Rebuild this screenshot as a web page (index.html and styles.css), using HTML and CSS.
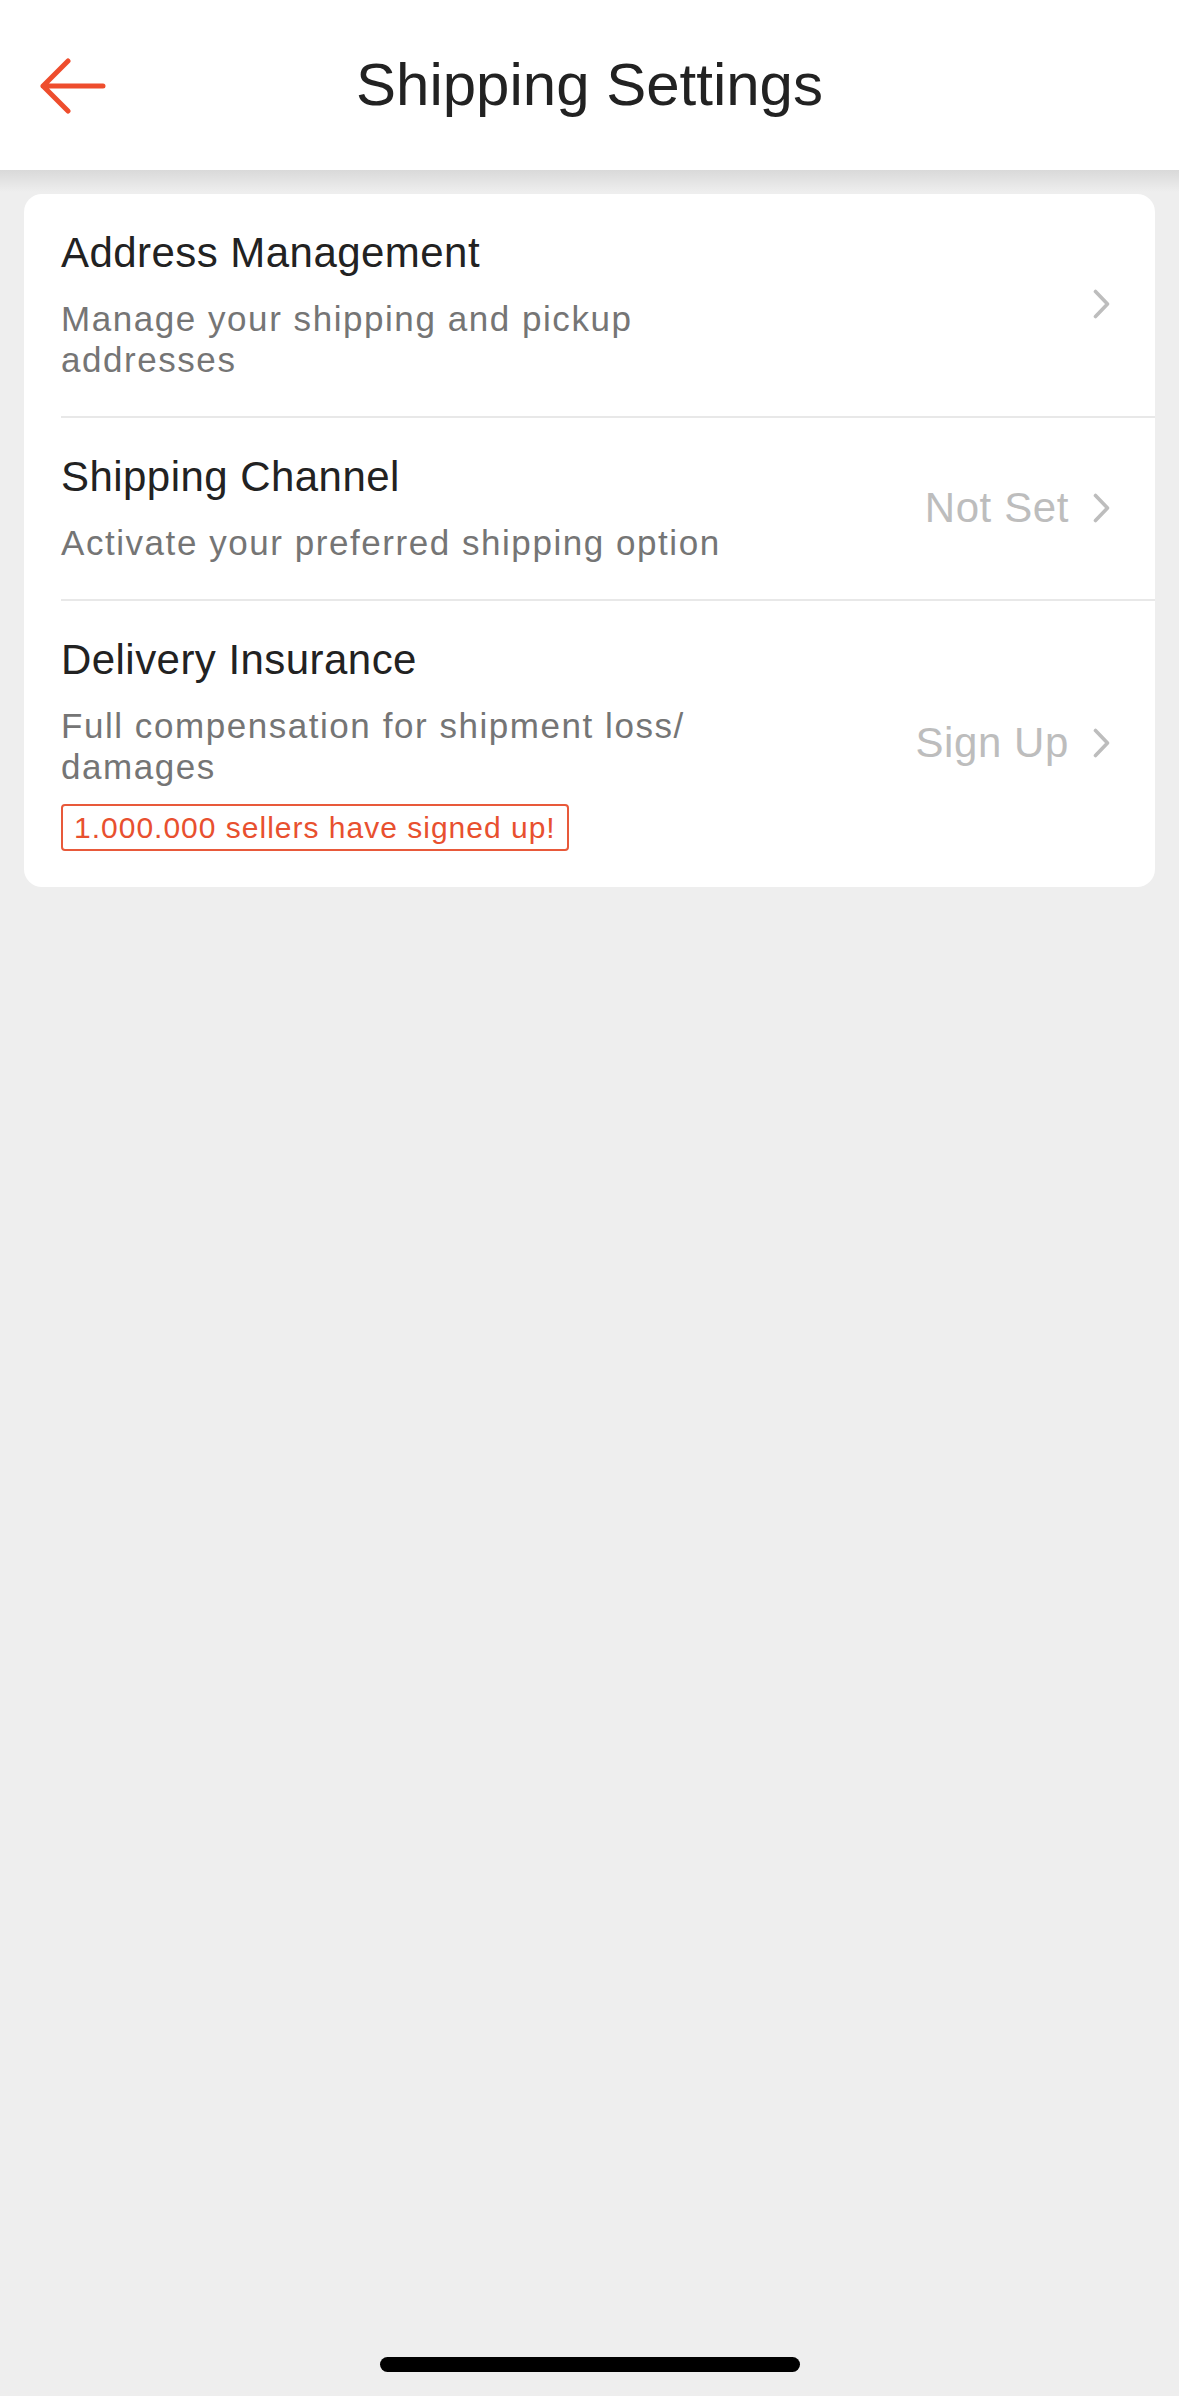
FILE: index.html
```html
<!DOCTYPE html>
<html lang="en">
<head>
<meta charset="utf-8">
<title>Shipping Settings</title>
<link rel="stylesheet" href="styles.css">
</head>
<body>
<div class="page">
  <header class="topbar">
    <div class="topbar-left">
      <svg class="back-icon" width="66" height="56" viewBox="0 0 66 56" aria-hidden="true">
        <path d="M28 3 L3 28 L28 53 M3 28 L63 28" fill="none" stroke="#ee4d2d" stroke-width="5" stroke-linecap="round" stroke-linejoin="round"/>
      </svg>
    </div>
    <h1 class="topbar-title">Shipping Settings</h1>
    <div class="topbar-right"></div>
  </header>

  <main class="content">
    <section class="card">
      <div class="row">
        <div class="row-inner">
          <div class="row-text">
            <div class="row-title">Address Management</div>
            <div class="row-sub">Manage your shipping and pickup addresses</div>
          </div>
          <div class="row-side">
            <svg class="chev" width="17" height="30" viewBox="0 0 17 30" aria-hidden="true"><path d="M2.5 2.5 L14.5 15 L2.5 27.5" fill="none" stroke="#bdbdbd" stroke-width="3.6" stroke-linecap="round" stroke-linejoin="round"/></svg>
          </div>
        </div>
      </div>
      <div class="row">
        <div class="row-inner">
          <div class="row-text">
            <div class="row-title">Shipping Channel</div>
            <div class="row-sub">Activate your preferred shipping option</div>
          </div>
          <div class="row-side">
            <span class="row-value">Not Set</span>
            <svg class="chev" width="17" height="30" viewBox="0 0 17 30" aria-hidden="true"><path d="M2.5 2.5 L14.5 15 L2.5 27.5" fill="none" stroke="#bdbdbd" stroke-width="3.6" stroke-linecap="round" stroke-linejoin="round"/></svg>
          </div>
        </div>
      </div>
      <div class="row">
        <div class="row-inner row-last">
          <div class="row-text">
            <div class="row-title">Delivery Insurance</div>
            <div class="row-sub">Full compensation for shipment loss/<wbr>damages</div>
            <div class="badge">1.000.000 sellers have signed up!</div>
          </div>
          <div class="row-side">
            <span class="row-value">Sign Up</span>
            <svg class="chev" width="17" height="30" viewBox="0 0 17 30" aria-hidden="true"><path d="M2.5 2.5 L14.5 15 L2.5 27.5" fill="none" stroke="#bdbdbd" stroke-width="3.6" stroke-linecap="round" stroke-linejoin="round"/></svg>
          </div>
        </div>
      </div>
    </section>
  </main>

  <footer class="home-area">
    <div class="home-indicator"></div>
  </footer>
</div>
</body>
</html>
```

FILE: styles.css
```css
* {
  box-sizing: border-box;
}

html, body {
  margin: 0;
  padding: 0;
}

body {
  font-family: "Liberation Sans", Arial, sans-serif;
  background: #eeeeee;
  color: #222222;
}

.page {
  height: 2396px;
  display: flex;
  flex-direction: column;
}

.topbar {
  height: 170px;
  background: #ffffff;
  display: grid;
  grid-template-columns: 1fr auto 1fr;
  align-items: center;
}

.topbar-left {
  padding-left: 40px;
  display: flex;
  align-items: center;
  padding-top: 2px;
}

.back-icon {
  display: block;
}

.topbar-title {
  margin: 0;
  font-size: 60px;
  font-weight: 400;
  color: #222222;
  letter-spacing: 0;
  line-height: 1;
}

.content {
  flex: 1;
  background: linear-gradient(to bottom, #d9d9d9 0px, #eeeeee 22px, #eeeeee 100%);
  padding: 24px 24px 0;
}

.card {
  background: #ffffff;
  border-radius: 18px;
  overflow: hidden;
}

.row {
  padding-left: 37px;
  display: flex;
}

.row-inner {
  flex: 1;
  display: flex;
  align-items: center;
  padding: 34px 45px 36px 0;
  border-bottom: 2px solid #e8e8e8;
}

.row-inner.row-last {
  border-bottom: none;
}

.row-text {
  max-width: 700px;
  display: flex;
  flex-direction: column;
  align-items: flex-start;
}

.row-title {
  font-size: 42px;
  line-height: 50px;
  letter-spacing: 0.45px;
  color: #222222;
}

.row-sub {
  margin-top: 20px;
  font-size: 35px;
  line-height: 41px;
  letter-spacing: 1.55px;
  color: #757575;
}

.badge {
  margin-top: 17px;
  font-size: 30px;
  line-height: 43px;
  letter-spacing: 1px;
  color: #e8502f;
  border: 2px solid #e8593a;
  border-radius: 4px;
  padding: 0 11px;
}

.row-side {
  margin-left: auto;
  flex-shrink: 0;
  display: flex;
  align-items: center;
  gap: 24px;
}

.row-value {
  font-size: 42px;
  line-height: 50px;
  letter-spacing: 0.6px;
  color: #bdbdbd;
}

.chev {
  display: block;
}

.home-area {
  display: flex;
  justify-content: center;
  padding-bottom: 24px;
  background: #eeeeee;
}

.home-indicator {
  width: 420px;
  height: 15px;
  border-radius: 8px;
  background: #000000;
}
```
